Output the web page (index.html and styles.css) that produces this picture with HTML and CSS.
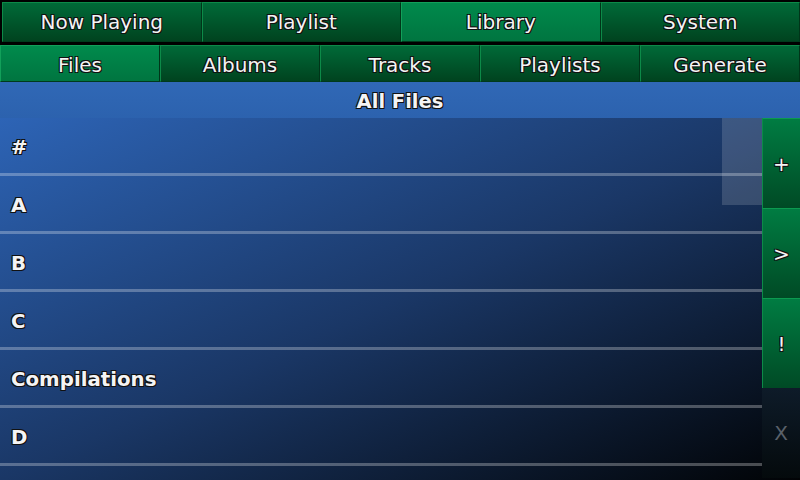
FILE: index.html
```html
<!DOCTYPE html>
<html>
<head>
<meta charset="utf-8">
<link rel="stylesheet" href="styles.css">
</head>
<body>
<div class="app">
  <div class="topbar">
    <div class="tab">Now Playing</div>
    <div class="tab">Playlist</div>
    <div class="tab active">Library</div>
    <div class="tab">System</div>
  </div>
  <div class="subbar">
    <div class="tab active">Files</div>
    <div class="tab">Albums</div>
    <div class="tab">Tracks</div>
    <div class="tab">Playlists</div>
    <div class="tab">Generate</div>
  </div>
  <div class="header">All Files</div>
  <div class="main">
    <div class="list">
      <div class="row">#</div>
      <div class="row">A</div>
      <div class="row">B</div>
      <div class="row">C</div>
      <div class="row">Compilations</div>
      <div class="row">D</div>
      <div class="thumb"></div>
    </div>
    <div class="side">
      <div class="btn">+</div>
      <div class="btn">&gt;</div>
      <div class="btn">!</div>
      <div class="btn disabled">X</div>
    </div>
  </div>
</div>
</body>
</html>
```
FILE: styles.css
```css
html, body {
  margin: 0;
  padding: 0;
  background: #000;
}
.app {
  width: 800px;
  height: 480px;
  overflow: hidden;
  display: flex;
  flex-direction: column;
  font-family: "DejaVu Sans", sans-serif;
  color: #f4f4f4;
  background: #000;
}
.topbar {
  flex: none;
  display: flex;
  height: 40px;
  margin-top: 2px;
  margin-bottom: 3px;
  padding-left: 2px;
}
.subbar {
  flex: none;
  display: flex;
  height: 37px;
}
.tab {
  flex: 1;
  display: flex;
  align-items: center;
  justify-content: center;
  font-size: 20px;
  box-sizing: border-box;
  border-top: 1px solid #0c8a48;
  border-left: 1px solid #0c8a48;
  border-right: 1px solid #003519;
  border-bottom: 1px solid #003a1c;
  background: linear-gradient(to bottom, #006a38, #00431f);
  text-shadow: 1px 1px 0 #111, -1px -1px 0 #111, 1px -1px 0 #111, -1px 1px 0 #111;
}
.subbar .tab {
  padding-top: 2px;
}
.tab.active {
  background: linear-gradient(to bottom, #008a4c, #007540);
  border-top-color: #12a05a;
  border-left-color: #12a05a;
}
.header {
  flex: none;
  height: 36px;
  box-sizing: border-box;
  padding-top: 2px;
  display: flex;
  align-items: center;
  justify-content: center;
  font-size: 19.5px;
  font-weight: bold;
  background: linear-gradient(to bottom, #3068b6, #2c62ae);
  text-shadow: 1px 1px 0 #111, -1px -1px 0 #111, 1px -1px 0 #111, -1px 1px 0 #111;
}
.main {
  flex: 1;
  min-height: 0;
  overflow: hidden;
  display: flex;
  background: linear-gradient(to bottom right, #2d64b6 0%, #1a3766 50%, #010305 100%);
}
.list {
  flex: 1;
  position: relative;
  display: flex;
  flex-direction: column;
}
.row {
  flex: none;
  height: 55px;
  box-sizing: border-box;
  padding-top: 4px;
  display: flex;
  align-items: center;
  padding-left: 11px;
  font-size: 19.8px;
  font-weight: bold;
  text-shadow: 1px 1px 0 #111, -1px -1px 0 #111, 1px -1px 0 #111, -1px 1px 0 #111;
  border-bottom: 3px solid transparent;
  border-image: linear-gradient(to bottom, rgba(255,255,255,0.32) 0, rgba(255,255,255,0.32) 33%, rgba(255,255,255,0.1) 33%, rgba(255,255,255,0.1) 66%, rgba(255,255,255,0.28) 66%) 1;
  height: 58px;
}
.thumb {
  position: absolute;
  right: 0;
  top: 0;
  width: 40px;
  height: 87px;
  background: rgba(255,255,255,0.15);
}
.side {
  flex: none;
  width: 38px;
  display: flex;
  flex-direction: column;
}
.btn {
  flex: none;
  height: 90px;
  box-sizing: border-box;
  display: flex;
  align-items: center;
  justify-content: center;
  font-size: 20px;
  border-top: 1px solid #0c9a50;
  border-left: 1px solid #0c8a48;
  background: linear-gradient(to bottom, #007c42, #004a25);
  text-shadow: 1px 1px 0 #111, -1px -1px 0 #111, 1px -1px 0 #111, -1px 1px 0 #111;
}
.btn.disabled {
  border: none;
  background: linear-gradient(to bottom, #0e1b29, #040a0c);
  color: #5a616a;
  text-shadow: none;
}
```
